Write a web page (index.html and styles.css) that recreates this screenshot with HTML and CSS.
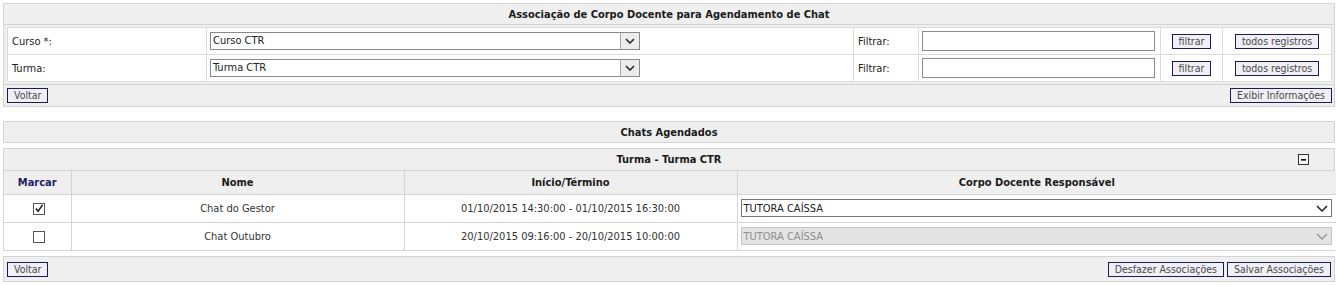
FILE: index.html
```html
<!DOCTYPE html>
<html lang="pt-BR">
<head>
<meta charset="utf-8">
<title>Associação de Corpo Docente para Agendamento de Chat</title>
<link rel="stylesheet" href="styles.css">
</head>
<body>
<div class="page">
  <div class="panel">
    <div class="panel-title">Associação de Corpo Docente para Agendamento de Chat</div>
    <div class="panel-body">
      <table class="form-table">
        <colgroup>
          <col class="w-lbl"><col class="w-sel"><col class="w-flt"><col class="w-inp"><col class="w-btn1"><col class="w-btn2">
        </colgroup>
        <tr>
          <td class="lbl">Curso *:</td>
          <td><div class="combo"><span class="combo-text">Curso CTR</span><span class="combo-btn"><svg width="10" height="6" viewBox="0 0 10 6"><path d="M1 1 L5 5 L9 1" fill="none" stroke="#222" stroke-width="1.5"/></svg></span></div></td>
          <td class="lbl">Filtrar:</td>
          <td><input class="textbox" type="text"></td>
          <td class="c"><button class="btn">filtrar</button></td>
          <td class="c"><button class="btn">todos registros</button></td>
        </tr>
        <tr>
          <td class="lbl">Turma:</td>
          <td><div class="combo"><span class="combo-text">Turma CTR</span><span class="combo-btn"><svg width="10" height="6" viewBox="0 0 10 6"><path d="M1 1 L5 5 L9 1" fill="none" stroke="#222" stroke-width="1.5"/></svg></span></div></td>
          <td class="lbl">Filtrar:</td>
          <td><input class="textbox" type="text"></td>
          <td class="c"><button class="btn">filtrar</button></td>
          <td class="c"><button class="btn">todos registros</button></td>
        </tr>
      </table>
    </div>
    <div class="panel-foot">
      <button class="btn">Voltar</button>
      <button class="btn">Exibir Informações</button>
    </div>
  </div>

  <div class="panel panel-gap">
    <div class="panel-title solo">Chats Agendados</div>
  </div>

  <div class="panel panel-gap-sm">
    <div class="panel-title turma">
      <span>Turma - Turma CTR</span>
      <span class="toggle"><svg width="11" height="11" viewBox="0 0 11 11"><rect x="0.5" y="0.5" width="10" height="10" fill="#f4f4f4" stroke="#333"/><rect x="3" y="5" width="5" height="1.6" fill="#111"/></svg></span>
    </div>
    <table class="grid">
      <colgroup>
        <col class="g-chk"><col class="g-nome"><col class="g-data"><col class="g-resp">
      </colgroup>
      <thead>
        <tr>
          <th class="marcar">Marcar</th>
          <th>Nome</th>
          <th>Início/Término</th>
          <th>Corpo Docente Responsável</th>
        </tr>
      </thead>
      <tbody>
        <tr>
          <td class="c"><span class="chk"><svg width="11" height="11" viewBox="0 0 11 11"><path d="M2 5.5 L4.5 8.5 L9.5 1.5" fill="none" stroke="#222" stroke-width="1.8"/></svg></span></td>
          <td class="c">Chat do Gestor</td>
          <td class="c">01/10/2015 14:30:00 - 01/10/2015 16:30:00</td>
          <td class="sel-cell"><div class="rsel"><span>TUTORA CAÍSSA</span><svg width="12" height="7" viewBox="0 0 12 7"><path d="M1 1 L6 6 L11 1" fill="none" stroke="#222" stroke-width="1.5"/></svg></div></td>
        </tr>
        <tr>
          <td class="c"><span class="chk"></span></td>
          <td class="c">Chat Outubro</td>
          <td class="c">20/10/2015 09:16:00 - 20/10/2015 10:00:00</td>
          <td class="sel-cell"><div class="rsel disabled"><span>TUTORA CAÍSSA</span><svg width="12" height="7" viewBox="0 0 12 7"><path d="M1 1 L6 6 L11 1" fill="none" stroke="#999" stroke-width="1.5"/></svg></div></td>
        </tr>
      </tbody>
    </table>
  </div>

  <div class="panel panel-gap-sm">
    <div class="panel-foot foot-lg">
      <button class="btn">Voltar</button>
      <div class="btn-group">
        <button class="btn">Desfazer Associações</button>
        <button class="btn">Salvar Associações</button>
      </div>
    </div>
  </div>
</div>
</body>
</html>
```

FILE: styles.css
```css
* { box-sizing: border-box; }

body {
  margin: 0;
  background: #fff;
  font-family: "DejaVu Sans Condensed", "DejaVu Sans", sans-serif;
  font-size: 11px;
  color: #222;
}

.page {
  padding: 3px;
  display: flex;
  flex-direction: column;
}

.panel {
  border: 1px solid #d4d4d4;
  background: #efefef;
}

.panel-gap { margin-top: 14px; }
.panel-gap-sm { margin-top: 5px; }

.panel-title {
  height: 21px;
  border-bottom: 1px solid #d4d4d4;
  display: flex;
  align-items: center;
  justify-content: center;
  font-weight: bold;
  color: #1a1a1a;
}

.panel-title.solo {
  height: 20px;
  border-bottom: none;
}

.panel-title.turma {
  height: 22px;
  position: relative;
}

.toggle {
  position: absolute;
  right: 25px;
  top: 5px;
  display: flex;
}

.panel-body {
  padding: 2px 3px;
}

.form-table {
  width: 100%;
  border-collapse: collapse;
  table-layout: fixed;
  background: #fff;
  border: 1px solid #d9d9d9;
}

.form-table td {
  border: 1px solid #dcdcdc;
  height: 27px;
  padding: 0 3px;
  vertical-align: middle;
}

.form-table td.lbl { padding-left: 4px; }
.form-table td.c { text-align: center; }

.w-lbl { width: 199px; }
.w-sel { width: 647px; }
.w-flt { width: 65px; }
.w-inp { width: 242px; }
.w-btn1 { width: 62px; }
.w-btn2 { width: 109px; }

.combo {
  width: 430px;
  height: 18px;
  border: 1px solid #8a8a8a;
  background: #fff;
  display: flex;
  align-items: stretch;
}

.combo-text {
  flex: 1;
  padding-left: 2px;
  line-height: 16px;
}

.combo-btn {
  width: 19px;
  border-left: 1px solid #a9a9a9;
  background: #ececec;
  display: flex;
  align-items: center;
  justify-content: center;
}

.textbox {
  display: block;
  width: 233px;
  height: 20px;
  margin: 0;
  border: 1px solid #8a8a8a;
  background: #fff;
  padding: 0 2px;
}

.btn {
  font-family: "DejaVu Sans Condensed", "DejaVu Sans", sans-serif;
  font-size: 10.5px;
  color: #4a4a4a;
  background: #efeff5;
  border: 1px solid #1c1c55;
  border-radius: 0;
  height: 15px;
  padding: 0 6px;
  margin: 0;
  line-height: 13px;
  white-space: nowrap;
}

.panel-foot {
  border-top: 1px solid #d4d4d4;
  height: 22px;
  margin-top: 0;
  padding: 3px 2px 0 3px;
  display: flex;
  justify-content: space-between;
  align-items: flex-start;
}

.panel-foot.foot-lg {
  border-top: none;
  height: 24px;
  padding-top: 5px;
  padding-right: 3px;
}

.btn-group {
  display: flex;
  gap: 3px;
}

.grid {
  width: 100%;
  border-collapse: collapse;
  table-layout: fixed;
  border-style: hidden;
}

.grid th,
.grid td {
  border: 1px solid #d4d4d4;
  vertical-align: middle;
}

.grid th {
  height: 23px;
  font-weight: bold;
  color: #1a1a1a;
  background: #efefef;
  text-align: center;
  padding: 0;
}

.grid th.marcar { color: #1d1d66; }

.grid td {
  height: 28px;
  background: #fff;
  color: #333;
  padding: 0 3px;
}

.grid td.c { text-align: center; }
.grid td.sel-cell { padding-right: 4px; }

.g-chk { width: 67px; }
.g-nome { width: 333px; }
.g-data { width: 333px; }
.g-resp { width: 599px; }

.chk {
  display: inline-flex;
  align-items: center;
  justify-content: center;
  width: 12px;
  height: 12px;
  border: 1px solid #555;
  background: #fff;
  margin-left: 3px;
  vertical-align: middle;
}

.rsel {
  height: 18px;
  border: 1px solid #777;
  background: #fff;
  display: flex;
  align-items: center;
  justify-content: space-between;
  padding: 0 3px 0 2px;
  color: #222;
}

.rsel.disabled {
  background: #e4e4e4;
  border-color: #c4c4c4;
  color: #8d8d8d;
}
```
